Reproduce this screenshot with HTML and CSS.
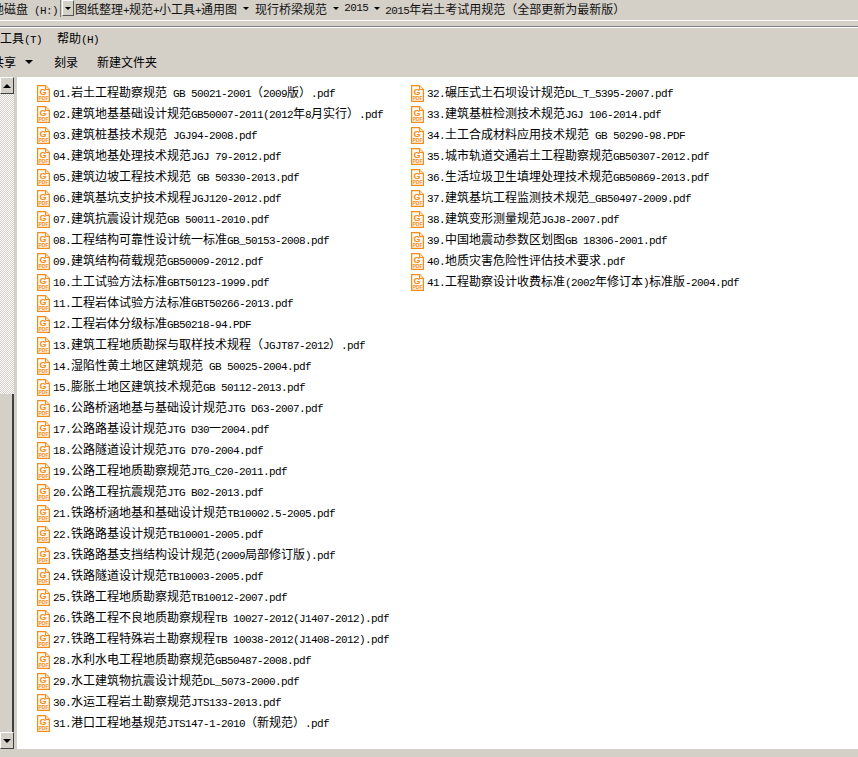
FILE: index.html
```html
<!DOCTYPE html>
<html lang="zh-CN">
<head>
    <meta charset="UTF-8">
    <meta name="viewport" content="width=device-width, initial-scale=1.0">
    <title>2015年岩土考试用规范</title>
    <link rel="stylesheet" href="styles.css">
</head>
<body>

    <!-- shared pdf file icon -->
    <svg class="icon-defs" width="0" height="0">
        <symbol id="pdf-icon" viewBox="0 0 13 17">
            <path d="M.6.6H8.5L12.4 4.5V16.4H.6Z" fill="#fffaf2" stroke="#f28c1c" stroke-width="1.2"/>
            <path d="M8.5.6V4.5H12.4" fill="#fde3bd" stroke="#f28c1c"/>
            <text x="6" y="9.5" class="icon-g">G</text>
            <text x="6.5" y="15" class="icon-pdf">PDF</text>
        </symbol>
    </svg>

    <!-- Address bar -->
    <div class="address-bar">
        <span class="drive"><span class="zh">地磁盘</span> (H:)</span>
        <span class="combo-button"><span class="arrow"></span></span>
        <span class="crumb zh">图纸整理<span class="en">+</span>规范<span class="en">+</span>小工具<span class="en">+</span>通用图</span>
        <span class="arrow"></span>
        <span class="crumb zh">现行桥梁规范</span>
        <span class="arrow"></span>
        <span class="crumb crumb-tight">2015</span>
        <span class="arrow"></span>
        <span class="crumb crumb-tight">2015<span class="zh">年岩土考试用规范（全部更新为最新版）</span></span>
    </div>
    <div class="bar-divider"></div>

    <!-- Menu and toolbar -->
    <div class="menu-bar">
        <span><span class="zh">工具</span>(T)</span>
        <span><span class="zh">帮助</span>(H)</span>
    </div>
    <div class="tool-bar">
        <span class="tool-share zh">共享</span>
        <span class="arrow arrow-big"></span>
        <span class="tool-burn zh">刻录</span>
        <span class="tool-new zh">新建文件夹</span>
    </div>

    <div class="main">
        <div class="scrollbar">
            <div class="scroll-button"><span class="arrow arrow-big arrow-up"></span></div>
            <div class="scroll-track"></div>
            <div class="scroll-thumb"></div>
            <div class="scroll-button"><span class="arrow arrow-big"></span></div>
        </div>

        <ul class="file-list">
            <li><svg class="pdf"><use href="#pdf-icon"/></svg><span>01.<span class="zh">岩土工程勘察规范</span> GB 50021-2001<span class="zh">（</span>2009<span class="zh">版）</span>.pdf</span></li>
            <li><svg class="pdf"><use href="#pdf-icon"/></svg><span>02.<span class="zh">建筑地基基础设计规范</span>GB50007-2011(2012<span class="zh">年</span>8<span class="zh">月实行）</span>.pdf</span></li>
            <li><svg class="pdf"><use href="#pdf-icon"/></svg><span>03.<span class="zh">建筑桩基技术规范</span> JGJ94-2008.pdf</span></li>
            <li><svg class="pdf"><use href="#pdf-icon"/></svg><span>04.<span class="zh">建筑地基处理技术规范</span>JGJ 79-2012.pdf</span></li>
            <li><svg class="pdf"><use href="#pdf-icon"/></svg><span>05.<span class="zh">建筑边坡工程技术规范</span> GB 50330-2013.pdf</span></li>
            <li><svg class="pdf"><use href="#pdf-icon"/></svg><span>06.<span class="zh">建筑基坑支护技术规程</span>JGJ120-2012.pdf</span></li>
            <li><svg class="pdf"><use href="#pdf-icon"/></svg><span>07.<span class="zh">建筑抗震设计规范</span>GB 50011-2010.pdf</span></li>
            <li><svg class="pdf"><use href="#pdf-icon"/></svg><span>08.<span class="zh">工程结构可靠性设计统一标准</span>GB_50153-2008.pdf</span></li>
            <li><svg class="pdf"><use href="#pdf-icon"/></svg><span>09.<span class="zh">建筑结构荷载规范</span>GB50009-2012.pdf</span></li>
            <li><svg class="pdf"><use href="#pdf-icon"/></svg><span>10.<span class="zh">土工试验方法标准</span>GBT50123-1999.pdf</span></li>
            <li><svg class="pdf"><use href="#pdf-icon"/></svg><span>11.<span class="zh">工程岩体试验方法标准</span>GBT50266-2013.pdf</span></li>
            <li><svg class="pdf"><use href="#pdf-icon"/></svg><span>12.<span class="zh">工程岩体分级标准</span>GB50218-94.PDF</span></li>
            <li><svg class="pdf"><use href="#pdf-icon"/></svg><span>13.<span class="zh">建筑工程地质勘探与取样技术规程（</span>JGJT87-2012<span class="zh">）</span>.pdf</span></li>
            <li><svg class="pdf"><use href="#pdf-icon"/></svg><span>14.<span class="zh">湿陷性黄土地区建筑规范</span> GB 50025-2004.pdf</span></li>
            <li><svg class="pdf"><use href="#pdf-icon"/></svg><span>15.<span class="zh">膨胀土地区建筑技术规范</span>GB 50112-2013.pdf</span></li>
            <li><svg class="pdf"><use href="#pdf-icon"/></svg><span>16.<span class="zh">公路桥涵地基与基础设计规范</span>JTG D63-2007.pdf</span></li>
            <li><svg class="pdf"><use href="#pdf-icon"/></svg><span>17.<span class="zh">公路路基设计规范</span>JTG D30<span class="zh">一</span>2004.pdf</span></li>
            <li><svg class="pdf"><use href="#pdf-icon"/></svg><span>18.<span class="zh">公路隧道设计规范</span>JTG D70-2004.pdf</span></li>
            <li><svg class="pdf"><use href="#pdf-icon"/></svg><span>19.<span class="zh">公路工程地质勘察规范</span>JTG_C20-2011.pdf</span></li>
            <li><svg class="pdf"><use href="#pdf-icon"/></svg><span>20.<span class="zh">公路工程抗震规范</span>JTG B02-2013.pdf</span></li>
            <li><svg class="pdf"><use href="#pdf-icon"/></svg><span>21.<span class="zh">铁路桥涵地基和基础设计规范</span>TB10002.5-2005.pdf</span></li>
            <li><svg class="pdf"><use href="#pdf-icon"/></svg><span>22.<span class="zh">铁路路基设计规范</span>TB10001-2005.pdf</span></li>
            <li><svg class="pdf"><use href="#pdf-icon"/></svg><span>23.<span class="zh">铁路路基支挡结构设计规范</span>(2009<span class="zh">局部修订版</span>).pdf</span></li>
            <li><svg class="pdf"><use href="#pdf-icon"/></svg><span>24.<span class="zh">铁路隧道设计规范</span>TB10003-2005.pdf</span></li>
            <li><svg class="pdf"><use href="#pdf-icon"/></svg><span>25.<span class="zh">铁路工程地质勘察规范</span>TB10012-2007.pdf</span></li>
            <li><svg class="pdf"><use href="#pdf-icon"/></svg><span>26.<span class="zh">铁路工程不良地质勘察规程</span>TB 10027-2012(J1407-2012).pdf</span></li>
            <li><svg class="pdf"><use href="#pdf-icon"/></svg><span>27.<span class="zh">铁路工程特殊岩土勘察规程</span>TB 10038-2012(J1408-2012).pdf</span></li>
            <li><svg class="pdf"><use href="#pdf-icon"/></svg><span>28.<span class="zh">水利水电工程地质勘察规范</span>GB50487-2008.pdf</span></li>
            <li><svg class="pdf"><use href="#pdf-icon"/></svg><span>29.<span class="zh">水工建筑物抗震设计规范</span>DL_5073-2000.pdf</span></li>
            <li><svg class="pdf"><use href="#pdf-icon"/></svg><span>30.<span class="zh">水运工程岩土勘察规范</span>JTS133-2013.pdf</span></li>
            <li><svg class="pdf"><use href="#pdf-icon"/></svg><span>31.<span class="zh">港口工程地基规范</span>JTS147-1-2010<span class="zh">（新规范）</span>.pdf</span></li>
            <li><svg class="pdf"><use href="#pdf-icon"/></svg><span>32.<span class="zh">碾压式土石坝设计规范</span>DL_T_5395-2007.pdf</span></li>
            <li><svg class="pdf"><use href="#pdf-icon"/></svg><span>33.<span class="zh">建筑基桩检测技术规范</span>JGJ 106-2014.pdf</span></li>
            <li><svg class="pdf"><use href="#pdf-icon"/></svg><span>34.<span class="zh">土工合成材料应用技术规范</span> GB 50290-98.PDF</span></li>
            <li><svg class="pdf"><use href="#pdf-icon"/></svg><span>35.<span class="zh">城市轨道交通岩土工程勘察规范</span>GB50307-2012.pdf</span></li>
            <li><svg class="pdf"><use href="#pdf-icon"/></svg><span>36.<span class="zh">生活垃圾卫生填埋处理技术规范</span>GB50869-2013.pdf</span></li>
            <li><svg class="pdf"><use href="#pdf-icon"/></svg><span>37.<span class="zh">建筑基坑工程监测技术规范</span>_GB50497-2009.pdf</span></li>
            <li><svg class="pdf"><use href="#pdf-icon"/></svg><span>38.<span class="zh">建筑变形测量规范</span>JGJ8-2007.pdf</span></li>
            <li><svg class="pdf"><use href="#pdf-icon"/></svg><span>39.<span class="zh">中国地震动参数区划图</span>GB 18306-2001.pdf</span></li>
            <li><svg class="pdf"><use href="#pdf-icon"/></svg><span>40.<span class="zh">地质灾害危险性评估技术要求</span>.pdf</span></li>
            <li><svg class="pdf"><use href="#pdf-icon"/></svg><span>41.<span class="zh">工程勘察设计收费标准</span>(2002<span class="zh">年修订本</span>)<span class="zh">标准版</span>-2004.pdf</span></li>
        </ul>
    </div>

</body>
</html>
```

FILE: styles.css
```css
body {
    margin: 0;
    width: 858px;
    height: 757px;
    overflow: hidden;
    background-color: #d4d0c8;
    color: #000;
    font-family: "Liberation Mono", monospace;
    font-size: 11px;
    letter-spacing: -0.6px;
    white-space: nowrap;
}
.zh {
    font-family: "Noto Sans CJK SC", sans-serif;
    font-size: 12px;
    letter-spacing: 0;
}
.en {
    font-family: "Liberation Mono", monospace;
    font-size: 11px;
    letter-spacing: -0.6px;
}
.icon-defs {
    display: block;
}

/* Small black triangle used on bars and buttons */
.arrow {
    display: block;
    flex: none;
    width: 0;
    height: 0;
    border-top: 3px solid #000;
    border-left: 3px solid transparent;
    border-right: 3px solid transparent;
}
.arrow-big {
    border-top-width: 4px;
    border-left-width: 4px;
    border-right-width: 4px;
}
.arrow-up {
    border-top: 0;
    border-bottom: 4px solid #000;
}

/* Address bar */
.address-bar {
    display: flex;
    align-items: center;
    gap: 6px;
    box-sizing: border-box;
    height: 20px;
    padding-bottom: 4px;
    color: #111;
}
.drive {
    box-sizing: border-box;
    flex: none;
    width: 69px;
    margin-left: -8px;
    border-right: 1px solid #808080;
}
.combo-button {
    display: flex;
    align-items: center;
    justify-content: center;
    flex: none;
    box-sizing: border-box;
    width: 12px;
    height: 16px;
    margin-left: -5px;
    margin-right: -5px;
    border: 1px solid;
    border-color: #fff #555 #555 #fff;
}
.crumb-tight {
    margin-left: -1px;
}
.bar-divider {
    height: 5px;
    margin-bottom: 2px;
    border-top: 1px solid #fff;
    box-shadow: 0 1px 0 #808080, 0 2px 0 #fff;
}

/* Menu and toolbar */
.menu-bar {
    display: flex;
    align-items: center;
    gap: 15px;
    height: 18px;
}
.tool-bar {
    display: flex;
    align-items: center;
    height: 31px;
}
.tool-share {
    margin-left: -8px;
}
.tool-bar .arrow {
    margin-left: 9px;
}
.tool-burn {
    margin-left: 21px;
}
.tool-new {
    margin-left: 19px;
}

/* Main area */
.main {
    display: flex;
    height: 672px;
}
.scrollbar {
    display: flex;
    flex-direction: column;
    flex: none;
    width: 14px;
    margin-right: 3px;
}
.scroll-button {
    display: flex;
    align-items: center;
    justify-content: center;
    flex: none;
    box-sizing: border-box;
    height: 17px;
    border: 1px solid;
    border-color: #fff #404040 #404040 #fff;
    background-color: #d4d0c8;
}
.scroll-track {
    flex: none;
    height: 300px;
    background: repeating-conic-gradient(#d4d0c8 0 25%, #fff 0 50%) 0 0 / 2px 2px;
}
.scroll-thumb {
    flex: 1;
    box-sizing: border-box;
    border-right: 2px solid #404040;
    background-color: #d4d0c8;
}

/* File list: two columns that fill downwards */
.file-list {
    flex: 1;
    display: grid;
    grid-auto-flow: column;
    grid-template-rows: repeat(31, 21px);
    grid-template-columns: 374px 1fr;
    align-content: start;
    margin: 0;
    padding: 6px 0 0 20px;
    list-style: none;
    background-color: #fff;
}
.file-list li {
    display: flex;
    align-items: center;
    gap: 3px;
    line-height: 19px;
}
.file-list li > span {
    margin-bottom: 2px;
}
.pdf {
    display: block;
    flex: none;
    width: 13px;
    height: 17px;
}
.icon-g {
    fill: #f28c1c;
    font-family: "Liberation Sans", sans-serif;
    font-size: 9px;
    font-weight: bold;
    letter-spacing: 0;
    text-anchor: middle;
}
.icon-pdf {
    fill: #f28c1c;
    font-family: "Liberation Sans", sans-serif;
    font-size: 5px;
    font-weight: bold;
    letter-spacing: 0;
    text-anchor: middle;
}
```
